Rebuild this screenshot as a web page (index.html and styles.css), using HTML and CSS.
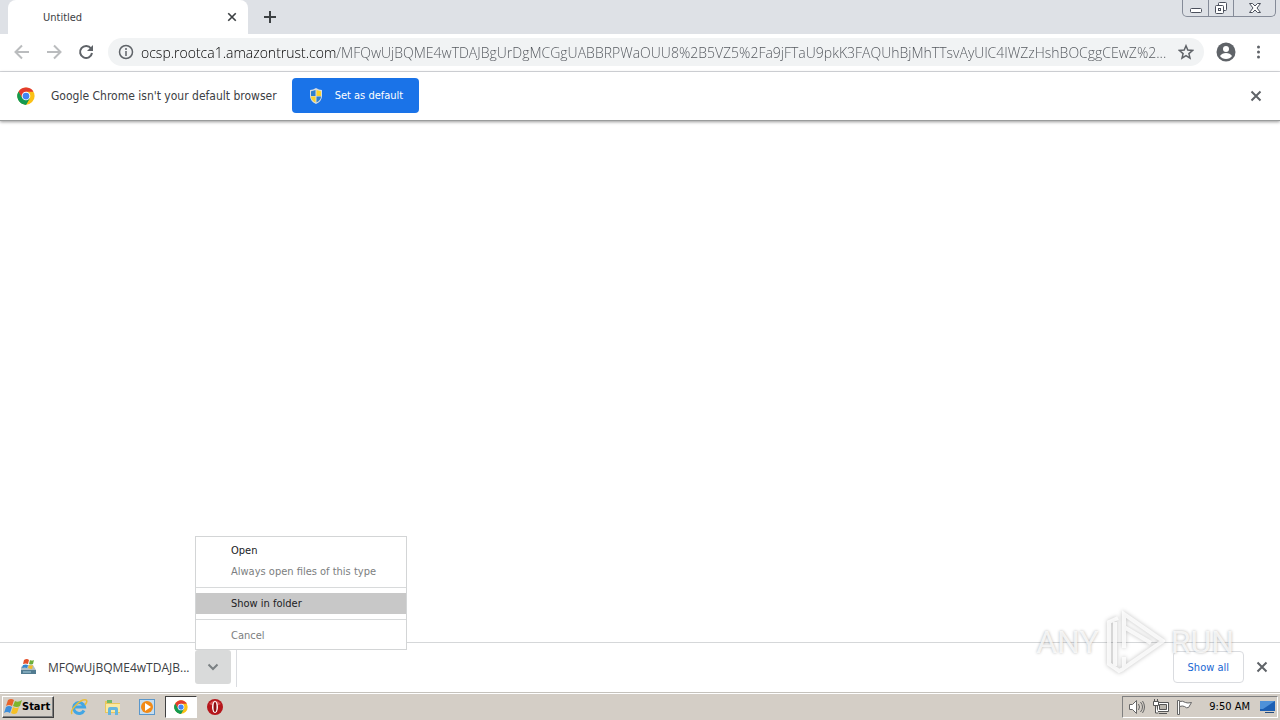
FILE: index.html
```
<!DOCTYPE html>
<html lang="en">

<head>
    <meta charset="UTF-8">
    <meta name="viewport" content="width=device-width, initial-scale=1.0">
    <title>Untitled</title>
    <link rel="stylesheet" href="styles.css">
</head>

<body>
    <!-- shared icons -->
    <svg class="defs" width="0" height="0" aria-hidden="true">
        <symbol id="chrome" viewBox="0 0 48 48">
            <circle cx="24" cy="24" r="23" fill="#fbc116" />
            <path d="M24 24L4.100 12.500A23 23 0 0 1 43.900 12.500H24z" fill="#e33b2e" />
            <path d="M4.100 12.500A23 23 0 0 0 24 47L34 30 24 24 14 30z" fill="#149a50" />
            <path d="M4.100 12.500L14 30 24 24V12.500z" fill="#e33b2e" />
            <path d="M4.100 12.500L14 30 24 35 34 30 24 47A23 23 0 0 1 4.100 12.500z" fill="#149a50" />
            <circle cx="24" cy="24" r="11.500" fill="#fff" />
            <circle cx="24" cy="24" r="9" fill="#4285f4" />
        </symbol>
        <symbol id="cross" viewBox="0 0 12 12">
            <path d="M1.500 1.500l9 9M10.500 1.500l-9 9" fill="none" stroke="currentColor" stroke-width="2" />
        </symbol>
        <symbol id="winflag" viewBox="0 0 18 18">
            <path d="M4 2q3-2 6 0L8 8Q5 6 2 8z" fill="#e8632a" />
            <path d="M11 3q3 2 7-1l-2 6q-3 2-7 0z" fill="#7db52c" />
            <path d="M2 9q3-2 6 0l-2 6q-3-2-6 0z" fill="#3d8edb" />
            <path d="M9 9q3 2 6 0l-2 6q-3 2-6 0z" fill="#f6c026" />
        </symbol>
    </svg>

    <header class="tab-strip">
        <div class="tab">
            <span class="tab-title">Untitled</span>
            <button class="icon-button tab-close" aria-label="Close tab"><svg width="10" height="10"><use href="#cross" /></svg></button>
        </div>
        <button class="icon-button new-tab" aria-label="New tab">
            <svg width="12" height="12" viewBox="0 0 12 12"><path d="M6 0v12M0 6h12" stroke="#3c4043" stroke-width="2" /></svg>
        </button>
        <div class="window-buttons">
            <button aria-label="Minimize">
                <svg width="14" height="14" viewBox="0 0 14 14"><rect x="1.500" y="7.500" width="11" height="4" rx="1" fill="#fff" stroke="#4b505c" /></svg>
            </button>
            <button aria-label="Restore">
                <svg width="14" height="14" viewBox="0 0 14 14" fill="#fff" stroke="#4b505c"><rect x="4.500" y="1.500" width="8" height="8" rx="1" /><rect x="1.500" y="4.500" width="8" height="8" rx="1" /><rect x="4.500" y="7.500" width="2" height="2" /></svg>
            </button>
            <button class="wide" aria-label="Close">
                <svg width="14" height="14" viewBox="0 0 14 14"><path d="M1.500 2.500h3L7 5l2.500-2.500h3L9 7l3.500 4.500h-3L7 9l-2.500 2.500h-3L5 7z" fill="#fff" stroke="#4b505c" /></svg>
            </button>
        </div>
    </header>

    <nav class="toolbar">
        <button class="icon-button faded" aria-label="Back">
            <svg width="16" height="16" viewBox="0 0 16 16"><path d="M15 8H2M8 1.500L1.500 8 8 14.500" /></svg>
        </button>
        <button class="icon-button faded" aria-label="Forward">
            <svg width="16" height="16" viewBox="0 0 16 16"><path d="M1 8h13M8 1.500L14.500 8 8 14.500" /></svg>
        </button>
        <button class="icon-button" aria-label="Reload">
            <svg width="16" height="16" viewBox="0 0 16 16"><path d="M13 4.500A6 6 0 1 0 14 9" /><path d="M15 1v6H9z" fill="currentColor" stroke="none" /></svg>
        </button>
        <div class="omnibox">
            <button class="icon-button small" aria-label="Site information">
                <svg width="16" height="16" viewBox="0 0 16 16"><circle cx="8" cy="8" r="6.500" stroke-width="1.500" /><path d="M8 7v5M8 4v2" stroke-width="1.500" /></svg>
            </button>
            <input class="url" type="text" aria-label="Address" value="ocsp.rootca1.amazontrust.com/MFQwUjBQME4wTDAJBgUrDgMCGgUABBRPWaOUU8%2B5VZ5%2Fa9jFTaU9pkK3FAQUhBjMhTTsvAyUlC4IWZzHshBOCggCEwZ%2...">
            <button class="icon-button small" aria-label="Bookmark this page">
                <svg width="16" height="16" viewBox="0 0 16 16"><path d="M8 1.800l1.800 4.300 4.700.400-3.600 3.100 1.100 4.600L8 11.700l-4 2.500 1.100-4.600L1.500 6.500l4.700-.400z" stroke-width="1.500" /></svg>
            </button>
        </div>
        <button class="icon-button" aria-label="Profile">
            <svg width="20" height="20" viewBox="0 0 20 20"><circle cx="10" cy="10" r="9.500" fill="currentColor" stroke="none" /><circle cx="10" cy="7" r="3" fill="#fff" stroke="none" /><path d="M4 14q2-3 6-3t6 3q-2 3-6 3t-6-3z" fill="#fff" stroke="none" /></svg>
        </button>
        <button class="icon-button" aria-label="Menu">
            <svg width="16" height="16" viewBox="0 0 16 16" fill="currentColor"><g fill="currentColor" stroke="none"><circle cx="8.500" cy="3" r="1.500" /><circle cx="8.500" cy="8" r="1.500" /><circle cx="8.500" cy="13" r="1.500" /></g></svg>
        </button>
    </nav>

    <section class="infobar">
        <svg width="18" height="18"><use href="#chrome" /></svg>
        <p>Google Chrome isn't your default browser</p>
        <button class="default-button">
            <svg width="16" height="16" viewBox="0 0 16 16">
                <path d="M8 0q3 2 6 2v6q0 5-6 8-6-3-6-8V2q3 0 6-2z" fill="#d8dde0" />
                <path d="M7.500 2Q5 3 3 3.200V8h4.500z" fill="#2f7fd0" />
                <path d="M8.500 2Q11 3 13 3.200V8H8.500z" fill="#fbd22b" />
                <path d="M3 8.500h4.500v6Q3 12 3 8.500z" fill="#fbd22b" />
                <path d="M13 8.500H8.500v6Q13 12 13 8.500z" fill="#2f7fd0" />
            </svg>
            Set as default
        </button>
        <button class="icon-button infobar-close" aria-label="Dismiss"><svg width="12" height="12"><use href="#cross" /></svg></button>
    </section>

    <main class="page"></main>

    <footer class="shelf">
        <div class="download">
            <button class="file">
                <svg width="18" height="18" viewBox="0 0 18 18">
                    <path d="M2 9l3-2h9l3 5v4H2z" fill="#b4bec4" />
                    <path d="M2 12h15v4H2z" fill="#527c91" />
                    <path d="M4 14h8" stroke="#a9d0e0" />
                    <path d="M5 2q3-2 5 0L9 6Q7 5 4 6z" fill="#e4502b" />
                    <path d="M11 2q2 1 4 0l-1 4q-2 1-4 0z" fill="#6cae3b" />
                    <path d="M4 7q3-1 5 0l-1 3q-2-1-5 0z" fill="#3287d2" />
                    <path d="M10 7q2 1 4 0l-1 4q-2 0-4-1z" fill="#f3bb29" />
                </svg>
                <span>MFQwUjBQME4wTDAJB...</span>
            </button>
            <div class="more">
                <button class="more-button" aria-label="Download options">
                    <svg width="12" height="8" viewBox="0 0 12 8"><path d="M1.500 1.500L6 6l4.500-4.500" fill="none" stroke="#7b8083" stroke-width="2" /></svg>
                </button>
                <div class="menu" role="menu">
                    <button role="menuitem">Open</button>
                    <button role="menuitem" disabled>Always open files of this type</button>
                    <hr>
                    <button role="menuitem" class="active">Show in folder</button>
                    <hr>
                    <button role="menuitem" disabled>Cancel</button>
                </div>
            </div>
        </div>
        <button class="show-all">Show all</button>
        <button class="icon-button shelf-close" aria-label="Close downloads bar"><svg width="12" height="12"><use href="#cross" /></svg></button>

        <div class="watermark">
            <span>ANY</span>
            <svg width="60" height="64" viewBox="0 0 60 64">
                <path d="M13 8L4 12v42l10 7 4-2M19 38V4l39 27-39 27V47M19 17l27 16M10 12v44" />
            </svg>
            <span>RUN</span>
        </div>
    </footer>

    <div class="taskbar">
        <button class="start"><svg width="18" height="18"><use href="#winflag" /></svg>Start</button>
        <div class="apps">
            <button aria-label="Internet Explorer">
                <svg width="18" height="18" viewBox="0 0 18 18">
                    <path d="M14 12.500A5.500 5.500 0 1 1 14.500 9H5" fill="none" stroke="#42a6e4" stroke-width="3" />
                    <path d="M2 16Q0 13 6 7t10-5q2 1-1 5" fill="none" stroke="#e9bd3a" stroke-width="1.500" />
                </svg>
            </button>
            <button aria-label="Windows Explorer">
                <svg width="18" height="18" viewBox="0 0 18 18">
                    <path d="M1 3h6l1 2h8v10H1z" fill="#e8c65c" />
                    <path d="M3 2h5v3H3z" fill="#72b968" />
                    <path d="M2 6h14v8H2z" fill="#f9e9a2" />
                    <path d="M4 17v-6q0-2 2-2h6q2 0 2 2v6h-3v-5H7v5z" fill="#65b6de" />
                </svg>
            </button>
            <button aria-label="Media Player">
                <svg width="18" height="18" viewBox="0 0 18 18">
                    <rect x="1.500" y="1.500" width="15" height="15" fill="#c6ddef" stroke="#5a97cb" />
                    <circle cx="9" cy="9" r="6" fill="#f28a16" />
                    <path d="M7 5l6 4-6 4z" fill="#fff" />
                </svg>
            </button>
            <button class="running" aria-label="Google Chrome"><svg width="14" height="14"><use href="#chrome" /></svg></button>
            <button aria-label="Opera">
                <svg width="18" height="18" viewBox="0 0 18 18">
                    <circle cx="9" cy="9" r="8" fill="#b5161b" />
                    <path d="M3 6q6-7 12 0-6 3-12 0z" fill="#dc5052" />
                    <ellipse cx="9" cy="9" rx="3" ry="6" fill="#fff" />
                    <ellipse cx="9" cy="9" rx="1.500" ry="5" fill="#8e0d12" />
                </svg>
            </button>
        </div>
        <div class="tray">
            <svg width="18" height="16" viewBox="0 0 18 16" fill="#fff" stroke="#666">
                <path d="M1.500 5.500h3l4-4v13l-4-4h-3z" /><path d="M10.500 5q2 3 0 6M12.500 3q4 5 0 10M14.500 2q4 6 0 12" fill="none" />
            </svg>
            <svg width="18" height="16" viewBox="0 0 18 16" fill="#fff" stroke="#555">
                <path d="M5.500 3.500h11v9h-11z" /><path d="M7.500 5.500h7v5h-7z" fill="#b9b5ad" /><path d="M7 14.500h8M3.500 6v8h3" /><path d="M1.500 2.500h5v4h-5zM2.500 0v2M5.500 0v2" />
            </svg>
            <svg width="18" height="16" viewBox="0 0 18 16" fill="#fff" stroke="#666">
                <path d="M1.500 1.500h2v14h-2z" /><path d="M3.500 2.500q3-1 6 1 2 1 6 0l-3 5q-2 1-4-1-2-1-5 0z" />
            </svg>
            <time>9:50 AM</time>
            <svg width="16" height="14" viewBox="0 0 16 14">
                <path d="M0 1h15v10H0z" fill="#1c5fb4" /><path d="M0 1h15L3 9H0z" fill="#4e91d9" /><path d="M5 12h9v1H5z" fill="#244b7e" />
            </svg>
        </div>
    </div>
</body>

</html>
```
FILE: styles.css
```
/* Global Styles */
* {
    box-sizing: border-box;
}

body {
    margin: 0;
    min-height: 100vh;
    display: flex;
    flex-direction: column;
    font-family: "DejaVu Sans Condensed", "Open Sans", sans-serif;
    font-size: 11px;
    background-color: #fff;
    color: #3c4043;
}

button {
    font: inherit;
    color: inherit;
    border: none;
    background: none;
    padding: 0;
}

svg {
    display: block;
    flex-shrink: 0;
}

.defs {
    position: absolute;
}

.icon-button {
    display: flex;
    align-items: center;
    justify-content: center;
    flex-shrink: 0;
    width: 32px;
    height: 28px;
    color: #5f6368;
}

/* Tabs */
.tab-strip {
    display: flex;
    height: 34px;
    background-color: #dee1e6;
    padding-left: 8px;
}

.tab {
    display: flex;
    align-items: center;
    justify-content: space-between;
    width: 240px;
    padding: 0 4px 0 35px;
    background-color: #fff;
    border-radius: 8px 8px 0 0;
}

.tab-close {
    width: 24px;
    color: #3c4043;
}

.new-tab {
    width: 44px;
    height: 34px;
}

.window-buttons {
    display: flex;
    height: 17px;
    margin-left: auto;
    margin-right: 4px;
    border: 1px solid #858b98;
    border-top: none;
    border-radius: 0 0 5px 5px;
}

.window-buttons button {
    display: flex;
    align-items: center;
    justify-content: center;
    width: 25px;
}

.window-buttons button + button {
    border-left: 1px solid #858b98;
}

.window-buttons .wide {
    width: 42px;
}

/* Toolbar */
.toolbar {
    display: flex;
    align-items: center;
    height: 38px;
    padding: 0 6px 1px;
    border-bottom: 1px solid #dadce0;
}

.toolbar svg {
    fill: none;
    stroke: currentColor;
    stroke-width: 2;
}

.toolbar .faded {
    color: #babcbe;
}

.omnibox {
    display: flex;
    align-items: center;
    flex: 1;
    min-width: 0;
    height: 28px;
    margin: 0 6px;
    padding: 0 6px;
    border-radius: 14px;
    background-color: #f1f3f4;
}

.small {
    width: 24px;
}

/* host name dark, path grey */
.url {
    flex: 1;
    min-width: 0;
    height: 24px;
    margin: 0 8px 0 3px;
    padding: 0;
    border: none;
    outline: none;
    font-family: "Open Sans", sans-serif;
    font-size: 14px;
    font-weight: 300;
    color: #5f6368;
    background: linear-gradient(to right, #000 196px, #50545a 196px);
    -webkit-background-clip: text;
    background-clip: text;
    -webkit-text-fill-color: transparent;
}

/* Default browser bar */
.infobar {
    display: flex;
    align-items: center;
    height: 49px;
    padding: 0 8px 1px 17px;
    border-bottom: 1px solid #9a9c9c;
    box-shadow: 0 1px 3px rgba(0, 0, 0, 0.4);
}

.infobar p {
    margin: 0 15px 0 16px;
    font-size: 12px;
}

.default-button {
    display: flex;
    align-items: center;
    gap: 11px;
    height: 35px;
    padding: 0 16px;
    border-radius: 4px;
    background-color: #1a73e8;
    color: #fff;
}

.infobar-close {
    margin-left: auto;
}

.page {
    flex: 1;
}

/* Downloads */
.shelf {
    position: relative;
    display: flex;
    align-items: center;
    height: 50px;
    padding: 0 2px 1px 0;
    border-top: 1px solid #d5d7d9;
}

.download {
    display: flex;
    align-items: center;
    height: 40px;
    padding-right: 5px;
    border-right: 1px solid #dadce0;
}

.file {
    display: flex;
    align-items: center;
    gap: 11px;
    width: 195px;
    padding-left: 19px;
    font-family: "Open Sans", sans-serif;
    font-size: 12px;
    white-space: nowrap;
}

.more {
    position: relative;
}

.more-button {
    display: flex;
    align-items: center;
    justify-content: center;
    width: 36px;
    height: 34px;
    border-radius: 3px;
    background-color: #d9dada;
}

.menu {
    position: absolute;
    left: 0;
    bottom: 100%;
    z-index: 2;
    width: 212px;
    padding: 3px 0;
    border: 1px solid #d3d5d6;
    background-color: #fff;
}

.menu button {
    display: block;
    width: 100%;
    height: 21px;
    padding-left: 35px;
    text-align: left;
    color: #202124;
}

.menu button:disabled {
    color: #7c7e80;
}

.menu .active {
    background-color: #c8c8c8;
}

.menu hr {
    margin: 5px 0;
    border: none;
    border-top: 1px solid #d8dadb;
}

.show-all {
    height: 32px;
    margin-left: auto;
    margin-right: 2px;
    padding: 0 14px;
    border: 1px solid #dadce0;
    border-radius: 4px;
    color: #1967d2;
}

.watermark {
    position: absolute;
    right: 46px;
    bottom: 18px;
    display: flex;
    align-items: center;
    gap: 6px;
    font-family: Roboto, sans-serif;
    font-size: 32px;
    color: rgba(255, 255, 255, 0.8);
    text-shadow: 0 0 3px rgba(0, 0, 0, 0.3);
    pointer-events: none;
}

.watermark svg {
    fill: none;
    stroke: rgba(255, 255, 255, 0.8);
    stroke-width: 4;
    filter: drop-shadow(0 0 2px rgba(0, 0, 0, 0.3));
}

/* Taskbar */
.taskbar {
    display: flex;
    align-items: center;
    height: 28px;
    padding: 0 2px;
    border-top: 1px solid #c5c2bc;
    box-shadow: inset 0 1px 0 #fff;
    background-color: #d4cec6;
    color: #000;
}

.start {
    display: flex;
    align-items: center;
    height: 22px;
    padding: 0 3px 0 1px;
    border: 1px solid;
    border-color: #fff #404040 #404040 #fff;
    box-shadow: inset -1px -1px 0 #808080;
    font-weight: bold;
}

.apps {
    display: flex;
    gap: 2px;
    margin-left: 9px;
}

.apps button {
    display: flex;
    align-items: center;
    justify-content: center;
    width: 32px;
    height: 22px;
}

.apps .running {
    border: 1px solid;
    border-color: #404040 #fff #fff #404040;
    background-color: #fff;
}

.tray {
    display: flex;
    align-items: center;
    gap: 6px;
    height: 22px;
    margin-left: auto;
    padding: 0 1px 0 5px;
    border: 1px solid;
    border-color: #808080 #fff #fff #808080;
}

.tray time {
    margin: 0 4px 0 9px;
}
```
